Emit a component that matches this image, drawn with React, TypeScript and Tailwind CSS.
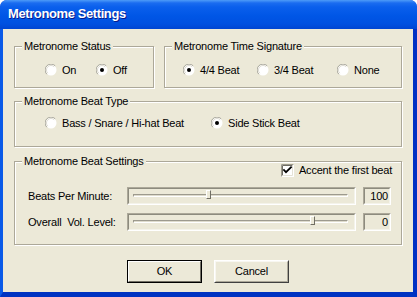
import React from "react"

function Radio({ checked }: { checked?: boolean }) {
  return (
    <svg width="12" height="12" viewBox="0 0 12 12" className="shrink-0">
      <circle cx="6" cy="6" r="5.5" fill="#fff" />
      <path d="M1.8 10.2 A5.5 5.5 0 0 1 10.2 1.8" stroke="#a7a69c" strokeWidth="1" fill="none" />
      <path d="M2.8 9.2 A4.3 4.3 0 0 1 9.2 2.8" stroke="#dcdad0" strokeWidth="1" fill="none" />
      {checked && <circle cx="6" cy="6" r="2" fill="#000" />}
    </svg>
  )
}

function Checkbox({ checked }: { checked?: boolean }) {
  return (
    <svg width="13" height="13" viewBox="0 0 13 13" className="shrink-0">
      <rect x="0" y="0" width="13" height="13" fill="#fff" />
      <path d="M0.5 12.5 V0.5 H12.5" stroke="#9d9a8e" fill="none" />
      <path d="M1.5 11.5 V1.5 H11.5" stroke="#6f6d63" fill="none" />
      <path d="M1.5 11.5 H11.5 V1.5" stroke="#e4e2d6" fill="none" />
      {checked && (
        <path d="M3 6 L5 8.2 L10 3.2" stroke="#000" strokeWidth="1.8" fill="none" strokeLinecap="square" />
      )}
    </svg>
  )
}

function Option({ label, checked, width }: { label: string; checked?: boolean; width: string }) {
  return (
    <div className={`flex items-center gap-[5px] h-[14px] ${width}`}>
      <Radio checked={checked} />
      <span className="leading-[14px] whitespace-nowrap">{label}</span>
    </div>
  )
}

function Group({
  title,
  boxClass,
  children,
}: {
  title: string
  boxClass: string
  children: React.ReactNode
}) {
  return (
    <div className="flex flex-col">
      <span className="relative z-10 self-start ml-[8px] px-[2px] leading-[14px] bg-[#ece9d8]">{title}</span>
      <div className={`-mt-[7px] border border-[#aca899] shadow-[inset_1px_1px_0_#fff,1px_1px_0_#fff] ${boxClass}`}>
        {children}
      </div>
    </div>
  )
}

function Slider({ thumb }: { thumb: number }) {
  return (
    <div className="h-[18px] w-[229px] border border-t-[#aca899] border-l-[#aca899] border-r-white border-b-white">
      <div className="h-full border border-t-[#8d8b7e] border-l-[#8d8b7e] border-r-[#f4f3ea] border-b-[#f4f3ea] pl-[4px] pr-[6px] pt-[5px]">
        <div className="relative h-[3px] border-t border-t-[#9d9a8e] border-l border-l-[#9d9a8e] border-b border-b-white border-r border-r-white bg-[#dedbcc]">
          <div
            className="absolute top-[-5px] h-[9px] w-[5px] bg-[#ece9d8] border border-t-white border-l-white border-r-[#716f64] border-b-[#716f64]"
            style={{ left: thumb }}
          />
        </div>
      </div>
    </div>
  )
}

function ValueBox({ value }: { value: string }) {
  return (
    <div className="h-[18px] w-[28px] border border-t-[#aca899] border-l-[#aca899] border-r-white border-b-white">
      <div className="h-full border border-t-[#8d8b7e] border-l-[#8d8b7e] border-r-[#f4f3ea] border-b-[#f4f3ea] flex items-center justify-end pr-[1px] leading-[14px]">
        {value}
      </div>
    </div>
  )
}

export default function App() {
  const sliders = [
    { label: "Beats Per Minute:", thumb: 72, value: "100" },
    { label: "Overall  Vol. Level:", thumb: 176, value: "0" },
  ]

  return (
    <div className="w-[417px] h-[297px] flex flex-col rounded-t-[7px] overflow-hidden bg-[#0a46d8] font-['Liberation_Sans',Arial,sans-serif] text-[11px] tracking-[-0.2px] text-black">
      {/* Title bar */}
      <div className="h-[29px] shrink-0 flex items-center pl-[8px] pb-[1px] bg-[linear-gradient(to_bottom,#4d9bf8_0px,#1a6cf0_3px,#0a5fec_7px,#0056e6_16px,#0050e0_24px,#0045d2_29px)]">
        <span className="text-white font-bold text-[13px] tracking-[-0.4px] [text-shadow:1px_1px_0_#0a1a8a]">
          Metronome Settings
        </span>
      </div>

      {/* Body */}
      <div className="flex-1 flex border-l-[3px] border-l-[#0a5ae8] border-r-[4px] border-r-[#0030c4] border-b-[5px] border-b-[#0033c2]">
        <div className="flex-1 bg-[#ece9d8] pt-[10px] pl-[11px] pr-[11px] flex flex-col">
          {/* Row 1 */}
          <div className="flex gap-[10px]">
            <div className="w-[140px]">
              <Group title="Metronome Status" boxClass="h-[42px] pt-[16px] pl-[30px] flex">
                <Option label="On" width="w-[51px]" />
                <Option label="Off" checked width="w-[50px]" />
              </Group>
            </div>
            <div className="flex-1">
              <Group title="Metronome Time Signature" boxClass="h-[42px] pt-[16px] pl-[18px] flex">
                <Option label="4/4 Beat" checked width="w-[74px]" />
                <Option label="3/4 Beat" width="w-[80px]" />
                <Option label="None" width="w-[60px]" />
              </Group>
            </div>
          </div>

          {/* Row 2 */}
          <div className="mt-[6px]">
            <Group title="Metronome Beat Type" boxClass="h-[46px] pt-[14px] pl-[30px] flex">
              <Option label="Bass / Snare / Hi-hat Beat" width="w-[166px]" />
              <Option label="Side Stick Beat" checked width="w-[120px]" />
            </Group>
          </div>

          {/* Row 3 */}
          <div className="mt-[7px]">
            <Group title="Metronome Beat Settings" boxClass="h-[84px] pt-[2px] flex flex-col">
              <div className="flex justify-end items-center gap-[5px] pr-[9px] h-[13px]">
                <Checkbox checked />
                <span className="leading-[13px]">Accent the first beat</span>
              </div>
              {sliders.map((s, i) => (
                <div key={i} className={`flex items-center pl-[13px] ${i === 0 ? "mt-[10px]" : "mt-[8px]"}`}>
                  <span className="w-[99px] whitespace-pre leading-[14px]">{s.label}</span>
                  <Slider thumb={s.thumb} />
                  <div className="ml-[7px]">
                    <ValueBox value={s.value} />
                  </div>
                </div>
              ))}
            </Group>
          </div>

          {/* Buttons */}
          <div className="mt-[15px] flex justify-center gap-[12px]">
            <button className="w-[75px] h-[23px] border border-black bg-[#ece9d8]">
              <div className="h-full flex items-center justify-center border border-t-white border-l-white border-r-[#716f64] border-b-[#716f64]">
                OK
              </div>
            </button>
            <button className="w-[75px] h-[23px] border border-t-white border-l-white border-r-[#404040] border-b-[#404040] bg-[#ece9d8]">
              <div className="h-full flex items-center justify-center border border-t-[#f8f7f1] border-l-[#f8f7f1] border-r-[#aca899] border-b-[#aca899]">
                Cancel
              </div>
            </button>
          </div>
        </div>
      </div>
    </div>
  )
}
